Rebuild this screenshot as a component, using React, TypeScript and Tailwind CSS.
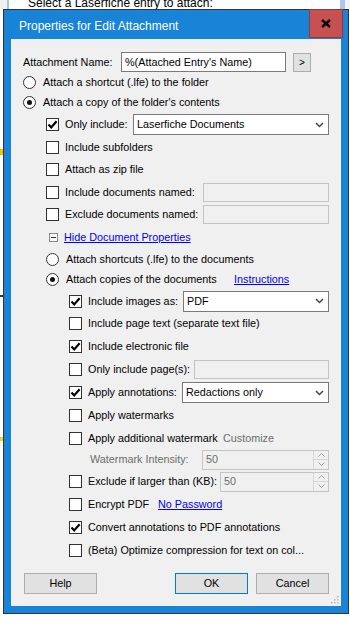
import React from "react";

const Check = ({ on }: { on?: boolean }) => (
  <span className="flex h-[13px] w-[13px] shrink-0 items-center justify-center border border-[#333] bg-white">
    {on && (
      <svg width="11" height="11" viewBox="0 0 11 11">
        <path d="M1.5 5.5 L4.2 8.4 L9.6 2.2" fill="none" stroke="#000" strokeWidth="2.2" />
      </svg>
    )}
  </span>
);

const Radio = ({ on }: { on?: boolean }) => (
  <span className="flex h-[13px] w-[13px] shrink-0 items-center justify-center rounded-full border border-[#333] bg-white">
    {on && <span className="h-[5px] w-[5px] rounded-full bg-[#111]" />}
  </span>
);

const Chevron = () => (
  <svg width="9" height="6" viewBox="0 0 9 6" className="shrink-0">
    <path d="M1 1 L4.5 4.5 L8 1" fill="none" stroke="#444" strokeWidth="1.5" />
  </svg>
);

const Dropdown = ({ value, width }: { value: string; width: string }) => (
  <div className={`ml-auto flex h-[21px] items-center justify-between border border-[#7a7a7a] bg-white pl-[3px] pr-[4px] ${width}`}>
    <span>{value}</span>
    <Chevron />
  </div>
);

const Spinner = ({ width }: { width: string }) => (
  <div className={`ml-auto flex h-[20px] items-stretch border border-[#c4c4c4] bg-[#f0f0f0] ${width}`}>
    <span className="flex flex-1 items-center pl-[3px] text-[#6d6d6d]">50</span>
    <div className="flex w-[15px] flex-col border-l border-[#d6d6d6]">
      <span className="flex flex-1 items-center justify-center border-b border-[#d6d6d6]">
        <svg width="7" height="4" viewBox="0 0 7 4">
          <path d="M0.5 3.5 L3.5 0.5 L6.5 3.5" fill="none" stroke="#a0a0a0" strokeWidth="1" />
        </svg>
      </span>
      <span className="flex flex-1 items-center justify-center">
        <svg width="7" height="4" viewBox="0 0 7 4">
          <path d="M0.5 0.5 L3.5 3.5 L6.5 0.5" fill="none" stroke="#a0a0a0" strokeWidth="1" />
        </svg>
      </span>
    </div>
  </div>
);

const Disabled = ({ width }: { width: string }) => (
  <div className={`ml-auto h-[19px] border border-[#c4c4c4] bg-[#f0f0f0] ${width}`} />
);

const Btn = ({ label, primary, extra }: { label: string; primary?: boolean; extra?: string }) => (
  <div
    className={`flex h-[21px] w-[73px] items-center justify-center border bg-[#e1e1e1] ${
      primary ? "border-[#0078d7]" : "border-[#adadad]"
    } ${extra ?? ""}`}
  >
    {label}
  </div>
);

export default function App() {
  return (
    <div className="relative h-[625px] w-[350px] overflow-hidden bg-white font-['Liberation_Sans',Arial,sans-serif] text-[10.8px] text-black">
      {/* window behind the dialog */}
      <div className="flex h-[9px]">
        <div className="w-[7px] bg-[#f0f0f0]" />
        <div className="w-[2px] bg-[#a9c4e2]" />
        <div className="relative flex-1 overflow-hidden bg-white">
          <span className="absolute left-[19px] top-[-6px] text-[12px]">Select a Laserfiche entry to attach:</span>
        </div>
        <div className="w-[5px] bg-[#a6c8ea]" />
        <div className="w-[5px] bg-[#f4f4f4]" />
      </div>
      <div className="flex flex-col gap-[140px] pt-[140px]">
        <div className="h-[6px] w-[3px] bg-[#f2c200]" />
        <div className="h-[2px] w-[3px] bg-[#333]" />
        <div className="h-[4px] w-[3px] bg-[#f2d23c]" />
      </div>

      {/* dialog */}
      <div className="absolute left-[3px] top-[9px] w-[346px] border border-[#333] bg-[#1883d7]">
        <div className="flex h-[29px] items-start justify-between">
          <span className="ml-[15px] mt-[7px] text-[12px] text-white">Properties for Edit Attachment</span>
          <div className="mr-[5px] mt-[-1px] flex h-[29px] w-[34px] items-center justify-center border border-[#8e3b35] bg-[#c75050]">
            <svg width="10" height="9" viewBox="0 0 10 9">
              <path d="M1 1 L9 8 M9 1 L1 8" stroke="#000" strokeWidth="2.4" />
            </svg>
          </div>
        </div>

        <div className="relative mx-[7px] mb-[7px] bg-[#f0f0f0] pb-[12px] pl-[12px] pr-[12px] pt-[13px]">
          <div className="flex h-[20px] items-center">
            <span className="w-[98px]">Attachment Name:</span>
            <div className="flex h-[20px] w-[165px] items-center border border-[#7a7a7a] bg-white pl-[3px]">
              %(Attached Entry's Name)
            </div>
            <div className="ml-[7px] flex h-[19px] w-[18px] items-center justify-center border border-[#adadad] bg-[#e1e1e1] text-[10px]">
              &gt;
            </div>
          </div>
          <div className="flex h-[20px] items-center">
            <Radio />
            <span className="ml-[7px]">Attach a shortcut (.lfe) to the folder</span>
          </div>
          <div className="flex h-[21px] items-center">
            <Radio on />
            <span className="ml-[7px]">Attach a copy of the folder's contents</span>
          </div>
          <div className="flex h-[23px] items-center pl-[23px]">
            <Check on />
            <span className="ml-[6px]">Only include:</span>
            <Dropdown value="Laserfiche Documents" width="w-[196px]" />
          </div>
          <div className="flex h-[22px] items-center pl-[23px]">
            <Check />
            <span className="ml-[6px]">Include subfolders</span>
          </div>
          <div className="flex h-[23px] items-center pl-[23px]">
            <Check />
            <span className="ml-[6px]">Attach as zip file</span>
          </div>
          <div className="flex h-[22px] items-center pl-[23px]">
            <Check />
            <span className="ml-[6px]">Include documents named:</span>
            <Disabled width="w-[126px]" />
          </div>
          <div className="flex h-[23px] items-center pl-[23px]">
            <Check />
            <span className="ml-[6px]">Exclude documents named:</span>
            <Disabled width="w-[126px]" />
          </div>
          <div className="flex h-[23px] items-center pl-[26px]">
            <span className="flex h-[9px] w-[9px] items-center justify-center border border-[#8a8a8a] bg-[#f8f8f8]">
              <span className="h-px w-[5px] bg-[#333]" />
            </span>
            <span className="ml-[6px] text-[#0000ff] underline">Hide Document Properties</span>
          </div>
          <div className="flex h-[20px] items-center pl-[23px]">
            <Radio />
            <span className="ml-[7px]">Attach shortcuts (.lfe) to the documents</span>
          </div>
          <div className="flex h-[21px] items-center pl-[23px]">
            <Radio on />
            <span className="ml-[7px] w-[168px]">Attach copies of the documents</span>
            <span className="text-[#0000ff] underline">Instructions</span>
          </div>
          <div className="flex h-[22px] items-center pl-[46px]">
            <Check on />
            <span className="ml-[6px]">Include images as:</span>
            <Dropdown value="PDF" width="w-[146px]" />
          </div>
          <div className="flex h-[23px] items-center pl-[46px]">
            <Check />
            <span className="ml-[6px]">Include page text (separate text file)</span>
          </div>
          <div className="flex h-[23px] items-center pl-[46px]">
            <Check on />
            <span className="ml-[6px]">Include electronic file</span>
          </div>
          <div className="flex h-[23px] items-center pl-[46px]">
            <Check />
            <span className="ml-[6px]">Only include page(s):</span>
            <Disabled width="w-[135px]" />
          </div>
          <div className="flex h-[23px] items-center pl-[46px]">
            <Check on />
            <span className="ml-[6px]">Apply annotations:</span>
            <Dropdown value="Redactions only" width="w-[147px]" />
          </div>
          <div className="flex h-[23px] items-center pl-[46px]">
            <Check />
            <span className="ml-[6px]">Apply watermarks</span>
          </div>
          <div className="flex h-[22px] items-center pl-[46px]">
            <Check />
            <span className="ml-[6px] w-[135px]">Apply additional watermark</span>
            <span className="text-[#6d6d6d]">Customize</span>
          </div>
          <div className="flex h-[21px] items-center pl-[67px]">
            <span className="text-[#6d6d6d]">Watermark Intensity:</span>
            <Spinner width="w-[127px]" />
          </div>
          <div className="flex h-[23px] items-center pl-[46px]">
            <Check />
            <span className="ml-[6px]">Exclude if larger than (KB):</span>
            <Spinner width="w-[109px]" />
          </div>
          <div className="flex h-[23px] items-center pl-[46px]">
            <Check />
            <span className="ml-[6px] w-[70px]">Encrypt PDF</span>
            <span className="text-[#0000ff] underline">No Password</span>
          </div>
          <div className="flex h-[23px] items-center pl-[46px]">
            <Check on />
            <span className="ml-[6px]">Convert annotations to PDF annotations</span>
          </div>
          <div className="flex h-[22px] items-center pl-[46px]">
            <Check />
            <span className="ml-[6px]">(Beta) Optimize compression for text on col...</span>
          </div>

          <div className="mt-[12px] flex items-center">
            <Btn label="Help" extra="ml-px" />
            <Btn label="OK" primary extra="ml-auto" />
            <Btn label="Cancel" extra="ml-[8px]" />
          </div>

          {/* resize grip */}
          <svg width="8" height="8" viewBox="0 0 8 8" className="absolute bottom-[2px] right-[2px]">
            <rect x="6" y="0" width="1.5" height="1.5" fill="#b8b8b8" />
            <rect x="3" y="3" width="1.5" height="1.5" fill="#b8b8b8" />
            <rect x="6" y="3" width="1.5" height="1.5" fill="#b8b8b8" />
            <rect x="0" y="6" width="1.5" height="1.5" fill="#b8b8b8" />
            <rect x="3" y="6" width="1.5" height="1.5" fill="#b8b8b8" />
            <rect x="6" y="6" width="1.5" height="1.5" fill="#b8b8b8" />
          </svg>
        </div>
      </div>
    </div>
  );
}
